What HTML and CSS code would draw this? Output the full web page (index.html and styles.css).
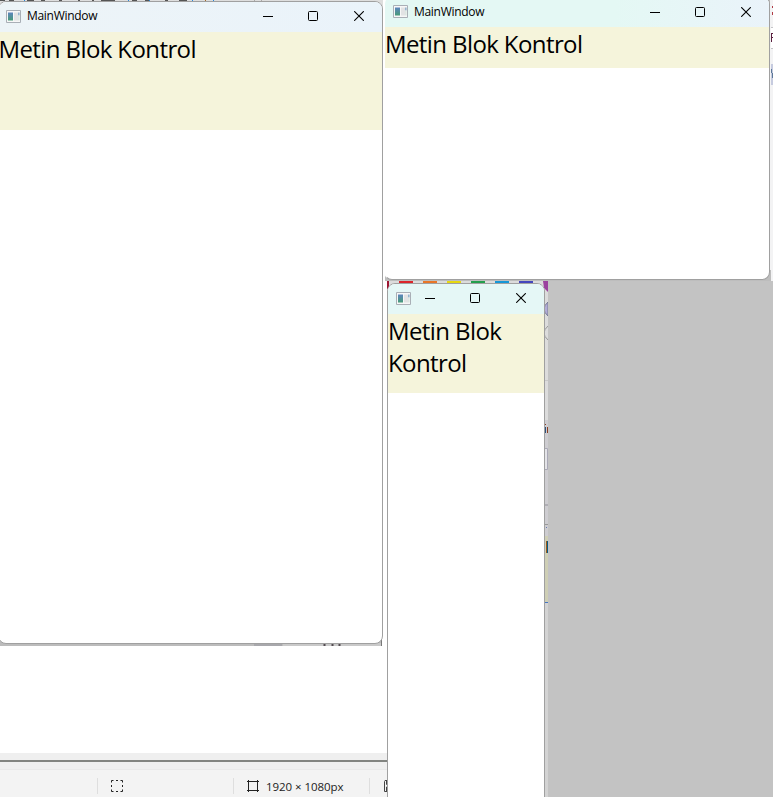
FILE: index.html
```html
<!DOCTYPE html>
<html lang="tr">
<head>
<meta charset="utf-8">
<title>MainWindow</title>
<link rel="stylesheet" href="styles.css">
</head>
<body>
<svg width="0" height="0" class="defs">
  <defs>
    <linearGradient id="pane" x1="0" y1="0" x2="0" y2="1"><stop offset="0" stop-color="#5d84bd"/><stop offset="1" stop-color="#479b78"/></linearGradient>
    <symbol id="app" viewBox="0 0 15 13"><path d="M.5.5h14v12H.5z" fill="#f7f7f7" stroke="#a9afb6"/><path d="M2 2.5h5v8H2z" fill="url(#pane)"/><path d="M8 2.5h4v8H8z" fill="#e2e3e4"/><path d="M12.2 2.5h1.3v3h-1.3z" fill="#7ca3c2"/><path d="M12.2 5.5h1.3v5h-1.3z" fill="#d5e3dc"/></symbol>
    <symbol id="min" viewBox="0 0 10 10"><path d="M0 5.5h10" stroke="#000"/></symbol>
    <symbol id="max" viewBox="0 0 10 10"><rect x=".5" y=".5" width="9" height="9" rx="1" fill="none" stroke="#000"/></symbol>
    <symbol id="close" viewBox="0 0 10 10"><path d="M.2.2l9.6 9.6M9.8.2L.2 9.8" stroke="#000" stroke-width="1.1"/></symbol>
  </defs>
</svg>
<main class="desktop">
  <svg class="behind" width="773" height="797" viewBox="0 0 773 797">
    <path d="M0 0h383v10H0z" fill="#dedede"/>
    <path d="M0 .5h5M9 .5h5M27 .5h7M41 .5h4M59 .5h3M78 .5h2M92 .5h2M101 .5h14M132 .5h5M145 .5h4M165 .5h3M179 .5h8" stroke="#555"/>
    <path d="M24.5 0v2M128.5 0v2M149.5 0v2M192.5 0v2M213.5 0v2" stroke="#298be0"/>
    <path d="M205.5 0v2" stroke="#a66c27"/><path d="M254.5 0v2M261.5 0v2" stroke="#aaa"/>
    <path d="M0 630h382v16H0z" fill="#bcbcbc"/>
    <path d="M254 643h28v3h-28z" fill="#a8a8ac"/><path d="M283 643h99v3h-99z" fill="#c9c9c9"/>
    <path d="M324.5 643v3M332.5 643v3M339.5 643v3" stroke="#534b51" stroke-width="2"/>
    <path d="M381.5 638v8" stroke="#777"/>
    <path d="M0 753h387v44H0z" fill="#efefef"/><path d="M0 761h387" stroke="#828480" stroke-width="2"/>
    <path d="M385 0h5v5h-5zM760 0h11v5h-11z" fill="#bcbcbc"/>
    <path d="M770 0h3v281h-3z" fill="#f3f3f4"/><path d="M771 64h2v21h-2z" fill="#c6cbdf"/>
    <path d="M771 27.5h2M771 48.5h2" stroke="#c5c5c8"/><path d="M771 28h2v20h-2z" fill="#fff"/>
    <path d="M772.5 6v2M772.5 12v3" stroke="#b03b45"/><path d="M771.5 33v9M772 33.5h1M772 37.5h1" stroke="#5b2140"/>
    <path d="M771.5 69v4M772.5 73v5" stroke="#5c7898"/>
    <path d="M385 270h386v11H385z" fill="#bdbdbd"/><path d="M771 270h2v11h-2z" fill="#f3f3f4"/>
    <path d="M387 281h161v516H387z" fill="#dcdcdc"/>
    <path d="M387 281h2v8h-2z" fill="#9d1531"/>
    <path d="M399 281h14v4h-14z" fill="#dc252b"/><path d="M423 281h14v4h-14z" fill="#e97628"/><path d="M447 281h14v4h-14z" fill="#e6d810"/><path d="M471 281h14v4h-14z" fill="#249f4d"/><path d="M495 281h14v4h-14z" fill="#1597d7"/><path d="M519 281h14v4h-14z" fill="#4446bd"/>
    <path d="M543 281h5v11l-4-4z" fill="#9b429f"/>
    <path d="M548 302q-8 7 0 14z" fill="#b2acd7" stroke="#777a93"/><path d="M548 326q-8 7 0 14" fill="none" stroke="#999"/>
    <path d="M545 380.5h3" stroke="#c8c8c8"/><path d="M545 420h3v127h-3z" fill="#cecdd1"/>
    <path d="M545 424.5h1M547.5 427v6" stroke="#8b3f24"/><path d="M545.5 427v6" stroke="#30517b"/>
    <path d="M545 448.500h2.500v21h-2.500" fill="#e4e4e8" stroke="#aaa9b7"/><path d="M545 505h3" stroke="#b0afb5" stroke-width="2"/><path d="M545 524.500h3" stroke="#999"/><path d="M546 527.500h1" stroke="#667cb1"/>
    <path d="M545 536h3v66h-3z" fill="#cfcfb5"/><path d="M546.5 541v12" stroke="#9d5a1a"/><path d="M547.5 541v12" stroke="#075b86"/><path d="M545 602.500h3" stroke="#4776c2"/>
    <path d="M545 603h3v194h-3z" fill="#d3d3d3"/>
    <path d="M548 281h225v516H548z" fill="#c3c3c3"/>
  </svg>

  <footer class="status">
    <div class="cell first"></div>
    <div class="cell selection"><svg width="12" height="12" viewBox="0 0 12 12"><path d="M.5 2.500V.5h2M5 .5h2M9.500.5h2v2M11.500 5v2M11.500 9.500v2h-2M7 11.500H5M2.500 11.500h-2v-2M.5 7V5" fill="none" stroke="#222"/></svg></div>
    <div class="cell size"><svg width="12" height="12" viewBox="0 0 12 12"><path d="M0 1.500h12M0 10.500h12M1.500 0v12M10.500 0v12" stroke="#222"/></svg><span>1920 × 1080px</span></div>
    <div class="cell save"><svg width="12" height="12" viewBox="0 0 12 12"><path d="M2 .5h8l1.500 2v9h-10v-10zM3.500 1v3.500H9V1M3.500 11V7H9v4" fill="none" stroke="#444"/></svg></div>
  </footer>

  <section class="window tall">
    <header class="bar"><svg class="app"><use href="#app"/></svg><span class="title">MainWindow</span><div class="controls"><svg><use href="#min"/></svg><svg><use href="#max"/></svg><svg><use href="#close"/></svg></div></header>
    <div class="text">Metin Blok Kontrol</div>
  </section>
  <section class="window wide">
    <header class="bar"><svg class="app"><use href="#app"/></svg><span class="title">MainWindow</span><div class="controls"><svg><use href="#min"/></svg><svg><use href="#max"/></svg><svg><use href="#close"/></svg></div></header>
    <div class="text">Metin Blok Kontrol</div>
  </section>
  <section class="window narrow">
    <header class="bar"><svg class="app"><use href="#app"/></svg><div class="controls"><svg><use href="#min"/></svg><svg><use href="#max"/></svg><svg><use href="#close"/></svg></div></header>
    <div class="text">Metin Blok<br>Kontrol</div>
  </section>
</main>
</body>
</html>
```
FILE: styles.css
```css
* { box-sizing: border-box; }
body { margin: 0; background: #fff; color: #000; font-family: "Open Sans", "Noto Sans", sans-serif; }
svg { display: block; }
.defs { position: absolute; }
.desktop { position: relative; width: 773px; height: 797px; overflow: hidden; }
.behind { position: absolute; left: 0; top: 0; }
.window { position: absolute; overflow: hidden; background: #fff; border: 1px solid #a0a0a0; border-radius: 8px; }
.tall { left: -2px; top: 1px; width: 385px; height: 643px; }
.wide { left: 384px; top: -4px; width: 386px; height: 284px; border-left-color: #fff; }
.narrow { left: 387px; top: 283px; width: 158px; height: 540px; }
.bar { display: flex; align-items: center; height: 30px; padding-bottom: 2px; background: #e5f7f6; }
.tall .bar { background: linear-gradient(90deg, #edf4f7, #eaf3fa); padding-left: 7px; }
.wide .bar { background: linear-gradient(90deg, #e4f8f4 60%, #eaf3fa); padding-left: 8px; padding-bottom: 1px; }
.narrow .bar { padding-left: 8px; }
.app { width: 15px; height: 13px; flex: none; }
.title { margin-left: 6px; font-size: 12px; line-height: 16px; letter-spacing: -0.3px; }
.controls { display: flex; gap: 36px; margin-left: auto; padding-right: 18px; }
.controls svg { width: 10px; height: 10px; }
.controls svg:first-child { margin-right: -1px; }
.text { height: 98px; background: #f5f4db; font-size: 24px; line-height: 32px; letter-spacing: -0.6px; padding-top: 1px; white-space: nowrap; }
.tall .text { text-indent: -0.5px; }
.wide .text { height: 41px; }
.narrow .text { height: 79px; }
.status { position: absolute; left: 0; top: 769px; width: 387px; height: 28px; display: flex; align-items: center; background: #f3f3f3; border-top: 1px solid #e9e9e9; overflow: hidden; }
.cell { display: flex; align-items: center; flex: none; height: 16px; padding-left: 13px; margin-top: 5px; border-left: 1px solid #dedede; }
.first { width: 97px; border: 0; }
.selection { width: 136px; }
.size { width: 136px; font-size: 11.500px; line-height: 16px; letter-spacing: -0.05px; color: #222; }
.size span { margin-left: 7px; padding-top: 1px; white-space: nowrap; }
.save { width: 40px; }
```
